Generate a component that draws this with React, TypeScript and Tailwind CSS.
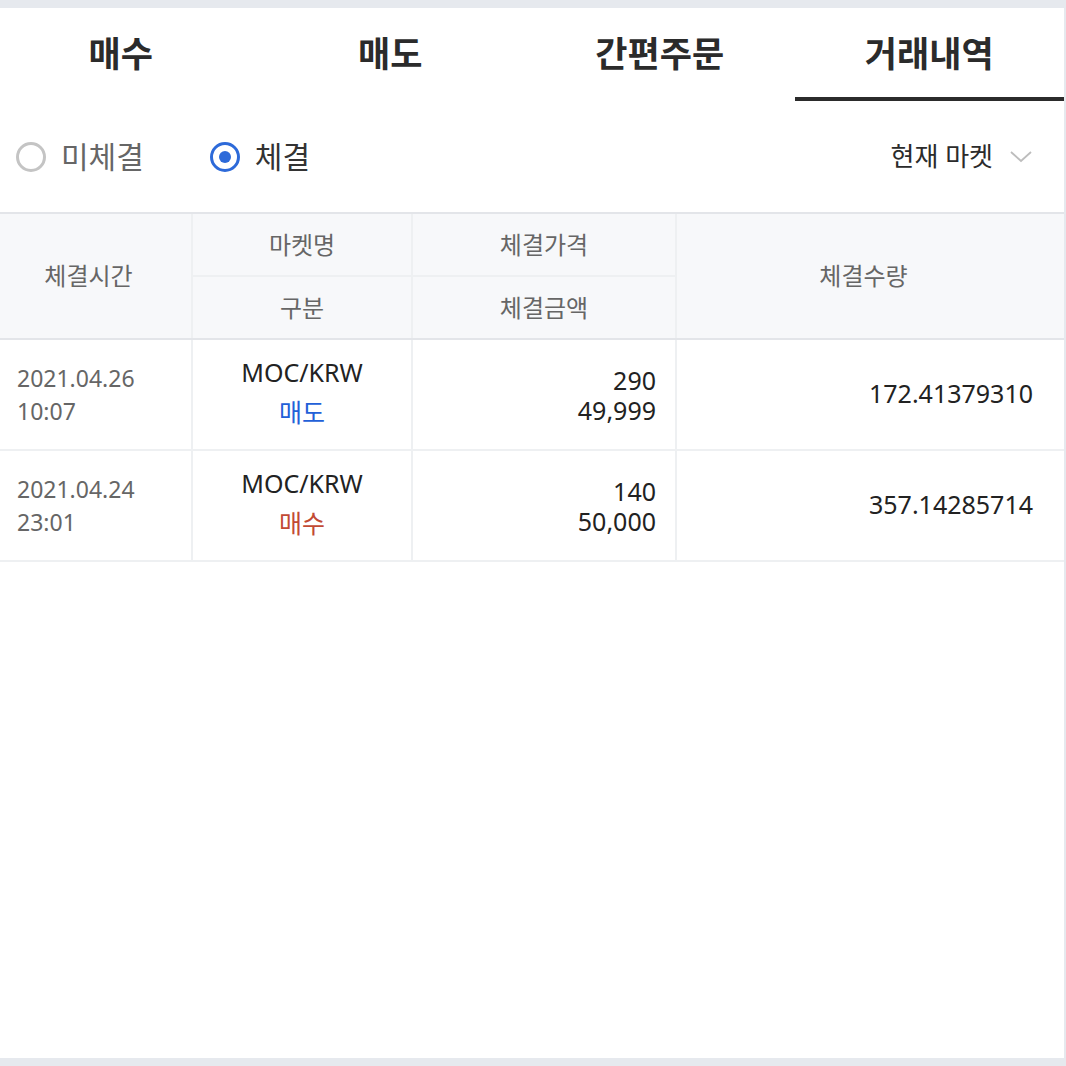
import React, { useState } from 'react';

type Trade = {
  date: string;
  time: string;
  market: string;
  side: '매수' | '매도';
  price: string;
  amount: string;
  qty: string;
};

const trades: Trade[] = [
  { date: '2021.04.26', time: '10:07', market: 'MOC/KRW', side: '매도', price: '290', amount: '49,999', qty: '172.41379310' },
  { date: '2021.04.24', time: '23:01', market: 'MOC/KRW', side: '매수', price: '140', amount: '50,000', qty: '357.14285714' },
];

const tabs = ['매수', '매도', '간편주문', '거래내역'];

const Radio: React.FC<{ checked: boolean; label: string; onClick: () => void }> = ({ checked, label, onClick }) => (
  <button onClick={onClick} className="flex items-center gap-[15px]">
    {checked ? (
      <span className="w-[30px] h-[30px] rounded-full border-[3px] border-[#2d6ad9] flex items-center justify-center">
        <span className="w-[12px] h-[12px] rounded-full bg-[#2d6ad9]" />
      </span>
    ) : (
      <span className="w-[30px] h-[30px] rounded-full border-[3px] border-[#c4c4c4]" />
    )}
    <span className={`text-[30px] leading-none ${checked ? 'text-[#333]' : 'text-[#666]'}`}>{label}</span>
  </button>
);

export default function App() {
  const [tab, setTab] = useState(3);
  const [filled, setFilled] = useState(true);

  return (
    <div
      className="w-[1066px] h-[1066px] bg-[#e6e9ee] pt-[8px] overflow-hidden"
      style={{ fontFamily: '"Noto Sans", "Noto Sans CJK KR", sans-serif' }}
    >
      <div className="w-[1064px] h-[1050px] bg-white overflow-hidden">
        <div className="-ml-[14px] w-[1078px]">
          {/* Tabs */}
          <div className="grid grid-cols-4 h-[93px]">
            {tabs.map((t, i) => (
              <button
                key={t}
                onClick={() => setTab(i)}
                className={`flex items-center justify-center pt-[4px] text-[35px] font-bold text-[#2b2b2b] border-b-4 ${
                  tab === i ? 'border-[#2b2b2b]' : 'border-transparent'
                }`}
              >
                {t}
              </button>
            ))}
          </div>

          {/* Filter row */}
          <div className="flex items-center justify-between h-[111px] pl-[30px] pr-[32px]">
            <div className="flex items-center gap-[66px]">
              <Radio checked={!filled} label="미체결" onClick={() => setFilled(false)} />
              <Radio checked={filled} label="체결" onClick={() => setFilled(true)} />
            </div>
            <button className="flex items-center gap-[17px] text-[26px] text-[#2b2b2b]">
              현재 마켓
              <svg width="22" height="12" viewBox="0 0 22 12" fill="none">
                <path d="M1 1l10 9 10-9" stroke="#bdbdbd" strokeWidth="1.8" />
              </svg>
            </button>
          </div>

          {/* Table header */}
          <div className="grid grid-cols-[207px_220px_264px_387px] grid-rows-[63px_61px] bg-[#f7f8fa] border-t-2 border-b-2 border-[#e3e5e9] text-[24px] text-[#666]">
            <div className="row-span-2 flex items-center justify-center border-r-2 border-[#eef0f2]">체결시간</div>
            <div className="flex items-center justify-center border-r-2 border-b-2 border-[#eef0f2]">마켓명</div>
            <div className="flex items-center justify-center border-r-2 border-b-2 border-[#eef0f2]">체결가격</div>
            <div className="row-span-2 flex items-center justify-center pr-[14px]">체결수량</div>
            <div className="flex items-center justify-center border-r-2 border-[#eef0f2]">구분</div>
            <div className="flex items-center justify-center border-r-2 border-[#eef0f2]">체결금액</div>
          </div>

          {/* Rows */}
          {trades.map((r) => (
            <div
              key={r.date + r.time}
              className="grid grid-cols-[207px_220px_264px_387px] h-[111px] border-b-2 border-[#eef0f2] text-[25px]"
            >
              <div className="flex flex-col justify-center pl-[31px] text-[23px] text-[#666] leading-[33px] border-r-2 border-[#eef0f2]">
                <span>{r.date}</span>
                <span>{r.time}</span>
              </div>
              <div className="flex flex-col items-center justify-center pb-[6px] leading-[40px] border-r-2 border-[#eef0f2]">
                <span className="text-[#222]">{r.market}</span>
                <span className={r.side === '매도' ? 'text-[#2260d8]' : 'text-[#c24a34]'}>{r.side}</span>
              </div>
              <div className="flex flex-col items-end justify-center pr-[19px] text-[#222] leading-[30px] border-r-2 border-[#eef0f2]">
                <span>{r.price}</span>
                <span>{r.amount}</span>
              </div>
              <div className="flex items-center justify-end pr-[31px] pb-[2px] text-[#222]">{r.qty}</div>
            </div>
          ))}
        </div>
      </div>
    </div>
  );
}
